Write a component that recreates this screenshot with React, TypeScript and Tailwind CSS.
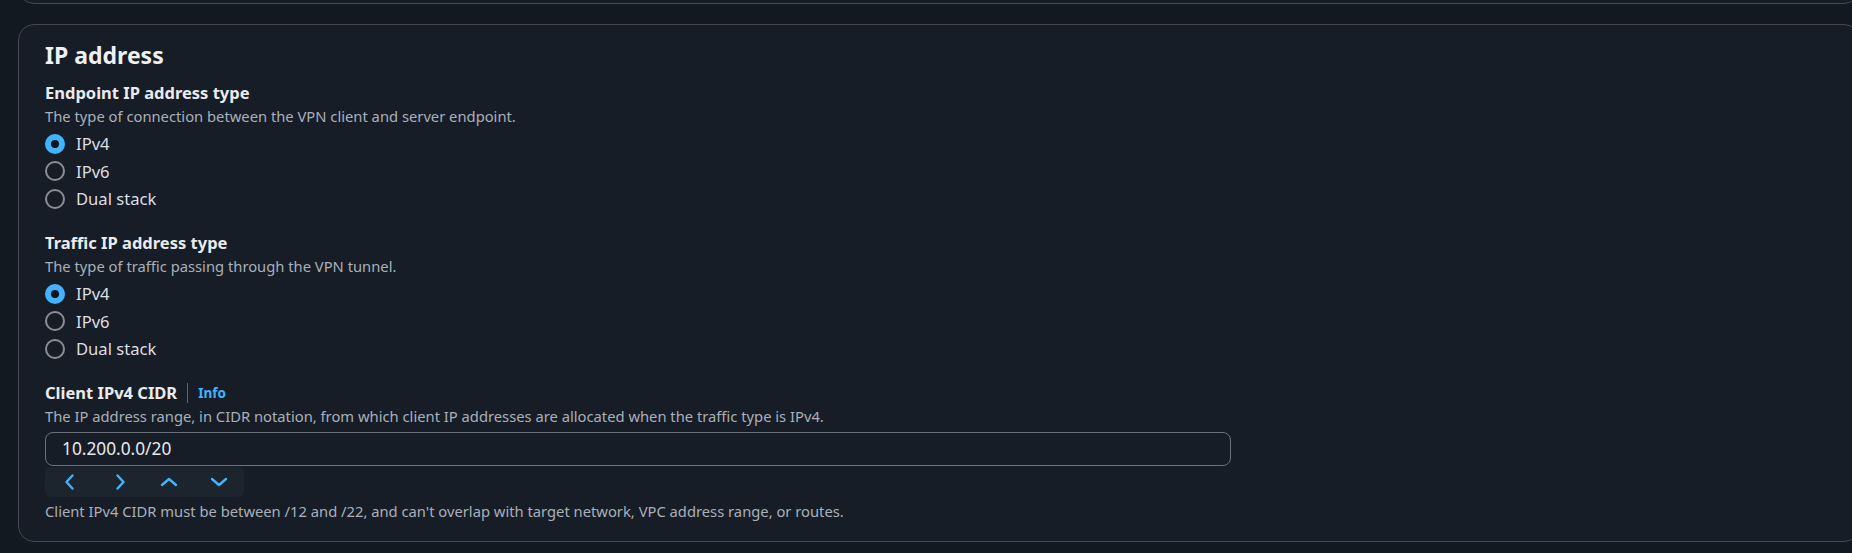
import React, { useState } from 'react'

type Option = { value: string; label: string }

const ipOptions: Option[] = [
  { value: 'ipv4', label: 'IPv4' },
  { value: 'ipv6', label: 'IPv6' },
  { value: 'dual', label: 'Dual stack' },
]

function RadioGroup({ name, value, onChange }: { name: string; value: string; onChange: (v: string) => void }) {
  return (
    <div className="mt-[3px] flex flex-col">
      {ipOptions.map((opt) => {
        const checked = opt.value === value
        return (
          <label key={opt.value} className="flex h-[27.5px] cursor-pointer items-center gap-[11px]">
            <input type="radio" name={name} className="hidden" checked={checked} onChange={() => onChange(opt.value)} />
            {checked ? (
              <span className="flex h-[20px] w-[20px] items-center justify-center rounded-full bg-[#42b4ff]">
                <span className="h-[8px] w-[8px] rounded-full bg-[#0f141a]" />
              </span>
            ) : (
              <span className="h-[20px] w-[20px] rounded-full border-2 border-[#8c8c94]" />
            )}
            <span className="text-[16.6px] leading-[27.5px] text-[#dedee3]">{opt.label}</span>
          </label>
        )
      })}
    </div>
  )
}

function Chevron({ dir }: { dir: 'left' | 'right' | 'up' | 'down' }) {
  const d = {
    left: 'M12.5 3.5 L6.5 10 L12.5 16.5',
    right: 'M7.5 3.5 L13.5 10 L7.5 16.5',
    up: 'M3 13 L10 7 L17 13',
    down: 'M3 7 L10 13 L17 7',
  }[dir]
  return (
    <svg width="20" height="20" viewBox="0 0 20 20" fill="none">
      <path d={d} stroke="#42b4ff" strokeWidth="2.4" strokeLinecap="round" strokeLinejoin="round" />
    </svg>
  )
}

export default function App() {
  const [endpointType, setEndpointType] = useState('ipv4')
  const [trafficType, setTrafficType] = useState('ipv4')
  const [cidr, setCidr] = useState('10.200.0.0/20')

  return (
    <div className="min-h-[553px] overflow-hidden bg-[#131920] font-['Noto_Sans',sans-serif]">
      {/* 上のカードの下端 */}
      <div className="-mt-[30px] ml-[18px] h-[34px] w-[1842px] rounded-2xl border border-[#434851] bg-[#171d26]" />

      <div className="ml-[18px] mt-[20px] w-[1842px] rounded-2xl border border-[#434851] bg-[#171d26] pb-[20px] pl-[26px] pt-[15px]">
        <h2 className="text-[23px] font-bold leading-[30px] text-[#eef0f2]">IP address</h2>

        {/* Endpoint */}
        <div className="mt-[11px]">
          <div className="text-[16.5px] font-bold leading-[24px] text-[#e9ebed]">Endpoint IP address type</div>
          <div className="text-[14.75px] leading-[22px] text-[#a9b0ba]">The type of connection between the VPN client and server endpoint.</div>
          <RadioGroup name="endpoint" value={endpointType} onChange={setEndpointType} />
        </div>

        {/* Traffic */}
        <div className="mt-[18.5px]">
          <div className="text-[16.5px] font-bold leading-[24px] text-[#e9ebed]">Traffic IP address type</div>
          <div className="text-[14.75px] leading-[22px] text-[#a9b0ba]">The type of traffic passing through the VPN tunnel.</div>
          <RadioGroup name="traffic" value={trafficType} onChange={setTrafficType} />
        </div>

        {/* CIDR */}
        <div className="mt-[18.5px]">
          <div className="flex h-[24px] items-center">
            <span className="text-[16.5px] font-bold leading-[24px] text-[#e9ebed]">Client IPv4 CIDR</span>
            <span className="mx-[10px] h-[20px] w-px bg-[#5f6670]" />
            <a className="text-[13.5px] font-bold text-[#42b4ff]">Info</a>
          </div>
          <div className="text-[14.75px] leading-[22px] text-[#a9b0ba]">
            The IP address range, in CIDR notation, from which client IP addresses are allocated when the traffic type is IPv4.
          </div>
          <input
            type="text"
            value={cidr}
            onChange={(e) => setCidr(e.target.value)}
            className="mt-[4.5px] block h-[34px] w-[1186px] rounded-lg border border-[#6b717b] bg-transparent px-[16px] text-[17.3px] text-[#e6e8eb] outline-none"
          />
          <div className="mt-[1px] flex h-[30px] w-[199px] items-center rounded-md bg-[#1c242e]">
            <span className="flex w-[50px] justify-center"><Chevron dir="left" /></span>
            <span className="flex w-[50px] justify-center"><Chevron dir="right" /></span>
            <span className="flex w-[50px] justify-center"><Chevron dir="up" /></span>
            <span className="flex w-[50px] justify-center"><Chevron dir="down" /></span>
          </div>
          <div className="mt-[4px] text-[14.75px] leading-[20px] text-[#a9b0ba]">
            Client IPv4 CIDR must be between /12 and /22, and can't overlap with target network, VPC address range, or routes.
          </div>
        </div>
      </div>
    </div>
  )
}
